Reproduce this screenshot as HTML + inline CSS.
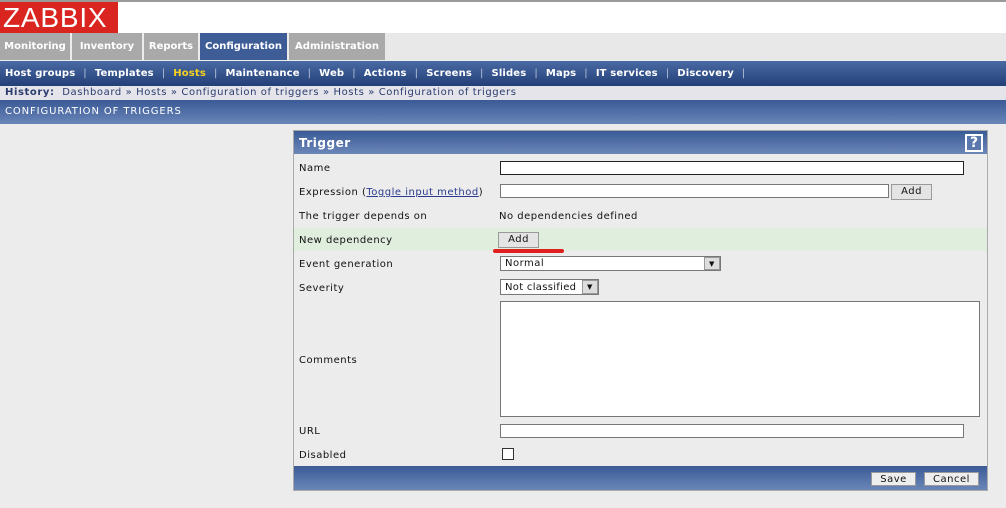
<!DOCTYPE html>
<html><head><style>
*{margin:0;padding:0;box-sizing:border-box}
body{width:1006px;height:508px;background:#ececec;font-family:"DejaVu Sans","Liberation Sans",sans-serif;font-size:10px;position:relative;overflow:hidden;color:#111;letter-spacing:.5px}
.a{position:absolute;white-space:nowrap}
.hdr{left:0;top:0;width:1006px;height:33px;background:#fff;border-top:2px solid #9a9a9a}
.logo{left:0;top:2px;width:118px;height:31px;background:#d9241f;color:#fff;font-family:"Liberation Sans",sans-serif;font-size:28px;line-height:31px;padding-left:3px;letter-spacing:.8px}
.mm{top:33px;height:27px;background:#a9a9a9;color:#fff;font-weight:bold;font-size:10px;line-height:28px;text-align:center;border-right:2px solid #ececec;letter-spacing:0}
.sub{left:0;top:61px;width:1006px;height:25px;background:linear-gradient(#4a6aa3,#233f78);color:#fff;font-weight:bold;font-size:10px;line-height:25px;padding-left:5px;letter-spacing:.15px}
.sub span.s{color:#b8c3d8;margin:0 8px;font-weight:normal}
.hist{left:0;top:86px;width:1006px;height:14px;background:#e4e4ea;color:#2b3c6e;line-height:14px;padding-left:5px;font-size:10px;letter-spacing:.6px}
.title{left:0;top:100px;width:1006px;height:24px;background:linear-gradient(#3a5a96,#6a86b8);color:#fff;line-height:24px;padding-left:5px;font-size:10px;letter-spacing:.9px}
.box{left:293px;top:130px;width:695px;height:361px;border:1px solid #aaa;background:#ececec}
.bh{left:294px;top:131px;width:693px;height:23px;background:linear-gradient(#3b5b97,#6b87b8);color:#fff;font-weight:bold;font-size:12px;line-height:24px;padding-left:5px}
.lbl{left:299px;font-size:10px}
.inp{background:#fff;border:1px solid #777;height:14px}
.btn{background:#e4e4e4;border:1px solid #999;font-size:10px;text-align:center;line-height:14px}
</style></head><body>
<div class="a hdr"></div>
<div class="a logo">ZABBIX</div>
<div class="a" style="left:0;top:33px;width:1006px;height:27px;background:#e8e8e8"></div>
<div class="a mm" style="left:0;width:72px">Monitoring</div>
<div class="a mm" style="left:72px;width:72px">Inventory</div>
<div class="a mm" style="left:144px;width:56px">Reports</div>
<div class="a mm" style="left:200px;width:89px;background:#3e5d97">Configuration</div>
<div class="a mm" style="left:289px;width:96px;border-right:none">Administration</div>
<div class="a sub">Host groups<span class="s">|</span>Templates<span class="s">|</span><span style="color:#f5d020">Hosts</span><span class="s">|</span>Maintenance<span class="s">|</span>Web<span class="s">|</span>Actions<span class="s">|</span>Screens<span class="s">|</span>Slides<span class="s">|</span>Maps<span class="s">|</span>IT services<span class="s">|</span>Discovery<span class="s">|</span></div>
<div class="a hist"><b>History:</b>&nbsp; Dashboard » Hosts » Configuration of triggers » Hosts » Configuration of triggers</div>
<div class="a title">CONFIGURATION OF TRIGGERS</div>

<div class="a box"></div>
<div class="a bh">Trigger</div>
<div class="a" style="left:965px;top:134px;width:18px;height:18px;border:2px solid #fff;color:#fff;font-weight:bold;font-size:14px;line-height:14px;text-align:center;background:#5a78ad;letter-spacing:0">?</div>

<div class="a lbl" style="top:163px">Name</div>
<div class="a inp" style="left:500px;top:161px;width:464px;border:1px solid #222"></div>

<div class="a lbl" style="top:187px">Expression (<span style="color:#2b3c8e;text-decoration:underline">Toggle input method</span>)</div>
<div class="a inp" style="left:500px;top:184px;width:389px"></div>
<div class="a btn" style="left:891px;top:184px;width:41px;height:16px">Add</div>

<div class="a lbl" style="top:211px">The trigger depends on</div>
<div class="a" style="left:499px;top:211px">No dependencies defined</div>

<div class="a" style="left:294px;top:228px;width:693px;height:23px;background:#dfeedd"></div>
<div class="a lbl" style="top:235px">New dependency</div>
<div class="a btn" style="left:498px;top:232px;width:41px;height:16px">Add</div>
<div class="a" style="left:493px;top:249px;width:71px;height:4px;background:#e02020;border-radius:2px"></div>

<div class="a lbl" style="top:259px">Event generation</div>
<div class="a inp" style="left:500px;top:256px;width:221px;height:15px;padding-left:4px;line-height:14px">Normal</div>
<div class="a" style="left:704px;top:257px;width:16px;height:13px;background:#ddd;border:1px solid #999;font-size:7px;text-align:center;line-height:12px">▼</div>

<div class="a lbl" style="top:283px">Severity</div>
<div class="a inp" style="left:500px;top:279px;width:99px;height:16px;padding-left:4px;line-height:15px;letter-spacing:.3px">Not classified</div>
<div class="a" style="left:582px;top:280px;width:16px;height:14px;background:#ddd;border:1px solid #999;font-size:7px;text-align:center;line-height:12px">▼</div>

<div class="a inp" style="left:500px;top:301px;width:480px;height:116px"></div>
<div class="a lbl" style="top:355px">Comments</div>

<div class="a lbl" style="top:426px">URL</div>
<div class="a inp" style="left:500px;top:424px;width:464px"></div>

<div class="a lbl" style="top:450px">Disabled</div>
<div class="a" style="left:502px;top:448px;width:12px;height:12px;background:#fff;border:1px solid #333"></div>

<div class="a" style="left:294px;top:466px;width:693px;height:24px;background:linear-gradient(#3b5b97,#6b87b8)"></div>
<div class="a btn" style="left:871px;top:472px;width:45px;height:14px;background:#eee;line-height:13px">Save</div>
<div class="a btn" style="left:924px;top:472px;width:55px;height:14px;background:#eee;line-height:13px">Cancel</div>
</body></html>
